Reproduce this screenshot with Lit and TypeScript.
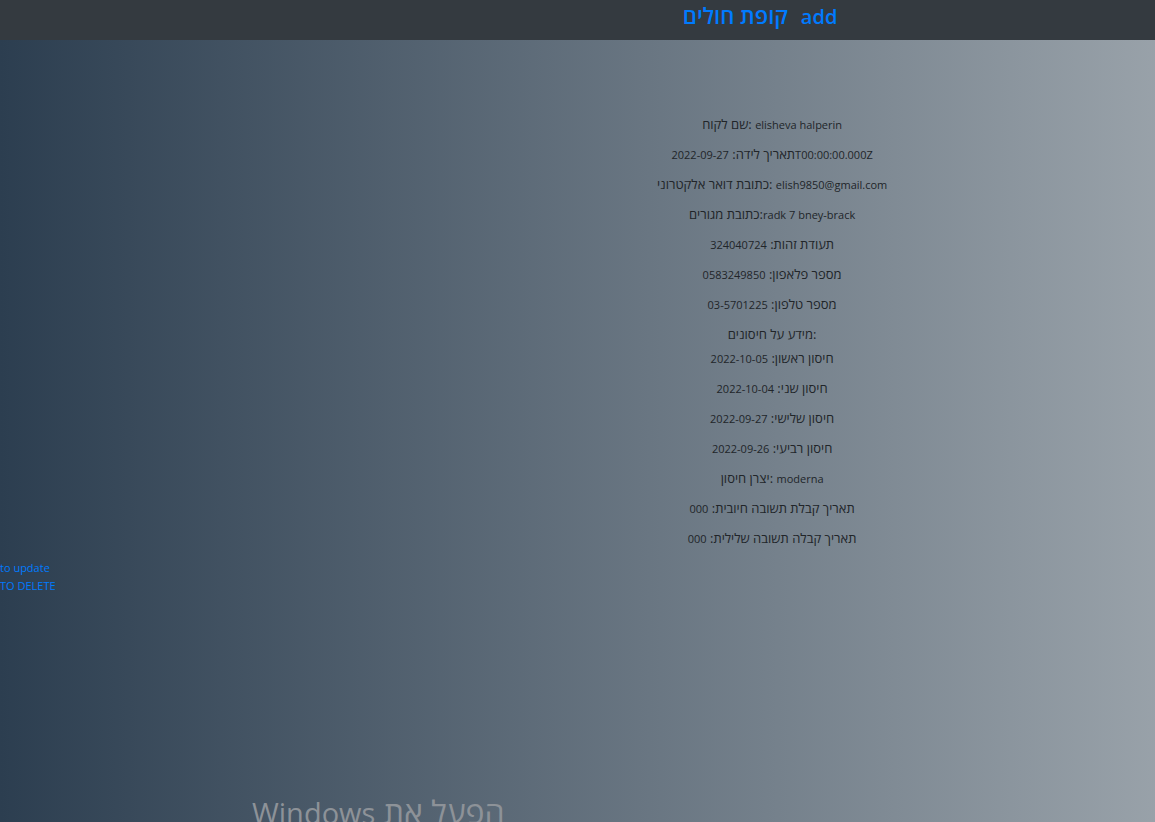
import { LitElement, html, css } from "lit";
import { customElement } from "lit/decorators.js";

interface Field {
  label: string;
  value: string;
}

const details: Field[] = [
  { label: "שם לקוח: ", value: "elisheva halperin" },
  { label: "תאריך לידה: ", value: "2022-09-27T00:00:00.000Z" },
  { label: "כתובת דואר אלקטרוני: ", value: "elish9850@gmail.com" },
  { label: "כתובת מגורים:", value: "radk 7 bney-brack" },
  { label: "תעודת זהות: ", value: "324040724" },
  { label: "מספר פלאפון: ", value: "0583249850" },
  { label: "מספר טלפון: ", value: "03-5701225" },
];

const vaccines: Field[] = [
  { label: "חיסון ראשון: ", value: "2022-10-05" },
  { label: "חיסון שני: ", value: "2022-10-04" },
  { label: "חיסון שלישי: ", value: "2022-09-27" },
  { label: "חיסון רביעי: ", value: "2022-09-26" },
  { label: "יצרן חיסון: ", value: "moderna" },
  { label: "תאריך קבלת תשובה חיובית: ", value: "000" },
  { label: "תאריך קבלה תשובה שלילית: ", value: "000" },
];

@customElement("app-root")
export class AppRoot extends LitElement {
  static styles = css`
    :host {
      display: block;
      position: relative;
      overflow: hidden;
      min-height: 100vh;
      font-family: "Open Sans", "Noto Sans", "DejaVu Sans", sans-serif;
      font-size: 13px;
      line-height: 18px;
      color: #212529;
    }
    .page {
      width: 133.7%;
      min-height: 100vh;
      background: linear-gradient(to right, #2c3e50, #bdc3c7);
    }
    .bar {
      display: flex;
      justify-content: center;
      align-items: baseline;
      gap: 13px;
      box-sizing: border-box;
      height: 40px;
      padding: 3px 24px 0 0;
      background: #343a40;
      font-size: 20px;
      line-height: 24px;
      font-weight: 600;
    }
    .brand {
      font-size: 22px;
    }
    a {
      color: #007bff;
      text-decoration: none;
    }
    a:hover {
      text-decoration: underline;
    }
    .record {
      padding-top: 75px;
      text-align: center;
    }
    .row {
      margin: 0 0 12px;
    }
    .value {
      font-size: 11px;
      line-height: 14px;
    }
    .heading {
      margin: 0 0 6px;
      font-size: 13px;
      font-weight: 400;
    }
    .actions {
      display: flex;
      flex-direction: column;
      align-items: flex-start;
      font-size: 11px;
    }
    .watermark {
      position: absolute;
      left: 252px;
      top: 792px;
      font-size: 32px;
      line-height: 40px;
      white-space: nowrap;
      color: #8d9298;
      pointer-events: none;
    }
    .product {
      font-size: 29px;
      line-height: 32px;
    }
  `;

  private row(f: Field) {
    return html`<p class="row">${f.label}<span class="value">${f.value}</span></p>`;
  }

  render() {
    return html`
      <div class="page">
        <nav class="bar">
          <a class="brand" href="#home">קופת חולים</a>
          <a href="#add">add</a>
        </nav>
        <main>
          <section class="record">
            ${details.map((f) => this.row(f))}
            <h2 class="heading">מידע על חיסונים:</h2>
            ${vaccines.map((f) => this.row(f))}
          </section>
          <div class="actions">
            <a href="#update">to update</a>
            <a href="#delete">TO DELETE</a>
          </div>
        </main>
      </div>
      <div class="watermark" dir="rtl">הפעל את <span class="product">Windows</span></div>
    `;
  }
}
